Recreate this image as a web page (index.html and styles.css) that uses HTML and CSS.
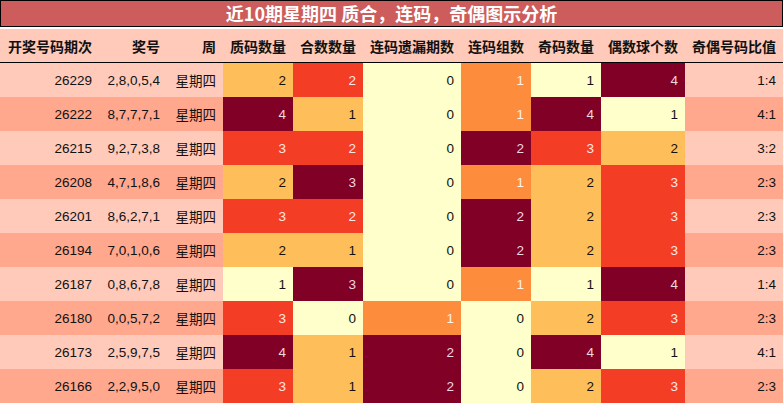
FILE: index.html
```html
<!DOCTYPE html>
<html lang="zh">
<head>
<meta charset="utf-8">
<title>近10期星期四 质合，连码，奇偶图示分析</title>
<link rel="stylesheet" href="styles.css">
</head>
<body>
<div class="wrap">
  <div class="title">近10期星期四 质合，连码，奇偶图示分析</div>
  <div class="grid">
    <div class="h">开奖号码期次</div><div class="h">奖号</div><div class="h">周</div><div class="h">质码数量</div><div class="h">合数数量</div><div class="h">连码遗漏期数</div><div class="h">连码组数</div><div class="h">奇码数量</div><div class="h">偶数球个数</div><div class="h">奇偶号码比值</div>

    <div class="c a">26229</div><div class="c a">2,8,0,5,4</div><div class="c a">星期四</div><div class="c yo">2</div><div class="c rd">2</div><div class="c ly">0</div><div class="c or">1</div><div class="c ly">1</div><div class="c dk">4</div><div class="c a">1:4</div>

    <div class="c b">26222</div><div class="c b">8,7,7,7,1</div><div class="c b">星期四</div><div class="c dk">4</div><div class="c yo">1</div><div class="c ly">0</div><div class="c or">1</div><div class="c dk">4</div><div class="c ly">1</div><div class="c b">4:1</div>

    <div class="c a">26215</div><div class="c a">9,2,7,3,8</div><div class="c a">星期四</div><div class="c rd">3</div><div class="c rd">2</div><div class="c ly">0</div><div class="c dk">2</div><div class="c rd">3</div><div class="c yo">2</div><div class="c a">3:2</div>

    <div class="c b">26208</div><div class="c b">4,7,1,8,6</div><div class="c b">星期四</div><div class="c yo">2</div><div class="c dk">3</div><div class="c ly">0</div><div class="c or">1</div><div class="c yo">2</div><div class="c rd">3</div><div class="c b">2:3</div>

    <div class="c a">26201</div><div class="c a">8,6,2,7,1</div><div class="c a">星期四</div><div class="c rd">3</div><div class="c rd">2</div><div class="c ly">0</div><div class="c dk">2</div><div class="c yo">2</div><div class="c rd">3</div><div class="c a">2:3</div>

    <div class="c b">26194</div><div class="c b">7,0,1,0,6</div><div class="c b">星期四</div><div class="c yo">2</div><div class="c yo">1</div><div class="c ly">0</div><div class="c dk">2</div><div class="c yo">2</div><div class="c rd">3</div><div class="c b">2:3</div>

    <div class="c a">26187</div><div class="c a">0,8,6,7,8</div><div class="c a">星期四</div><div class="c ly">1</div><div class="c dk">3</div><div class="c ly">0</div><div class="c or">1</div><div class="c ly">1</div><div class="c dk">4</div><div class="c a">1:4</div>

    <div class="c b">26180</div><div class="c b">0,0,5,7,2</div><div class="c b">星期四</div><div class="c rd">3</div><div class="c ly">0</div><div class="c or">1</div><div class="c ly">0</div><div class="c yo">2</div><div class="c rd">3</div><div class="c b">2:3</div>

    <div class="c a">26173</div><div class="c a">2,5,9,7,5</div><div class="c a">星期四</div><div class="c dk">4</div><div class="c yo">1</div><div class="c dk">2</div><div class="c ly">0</div><div class="c dk">4</div><div class="c ly">1</div><div class="c a">4:1</div>

    <div class="c b">26166</div><div class="c b">2,2,9,5,0</div><div class="c b">星期四</div><div class="c rd">3</div><div class="c yo">1</div><div class="c dk">2</div><div class="c ly">0</div><div class="c yo">2</div><div class="c rd">3</div><div class="c b">2:3</div>
  </div>
</div>
</body>
</html>
```

FILE: styles.css
```css
html, body {
  margin: 0;
  padding: 0;
  background: #ffffff;
}
.wrap {
  width: 783px;
}
.title {
  box-sizing: border-box;
  height: 27px;
  border: 1px solid #000;
  background: #cd5c5c;
  color: #ffffff;
  font-family: "Noto Sans CJK SC", "Noto Sans", sans-serif;
  font-weight: bold;
  font-size: 18px;
  line-height: 24px;
  text-align: center;
  margin-bottom: 2px;
}
.grid {
  display: grid;
  grid-template-columns: 99px 68px 56px 70px 70px 98px 70px 70px 84px 98px;
  grid-template-rows: 34px repeat(10, 34px);
}
.h {
  background: #ffcaba;
  border-bottom: 1px solid #000;
  font-family: "Noto Sans CJK SC", sans-serif;
  font-weight: bold;
  font-size: 14px;
  color: #111;
  display: flex;
  align-items: center;
  justify-content: flex-end;
  padding-right: 7px;
  white-space: nowrap;
}
.c {
  font-family: "Liberation Sans", "Noto Sans CJK SC", sans-serif;
  font-size: 13.5px;
  color: #111;
  display: flex;
  align-items: center;
  justify-content: flex-end;
  padding-right: 7px;
  white-space: nowrap;
}
.a { background: #ffcaba; }
.b { background: #ffa88e; }
.ly { background: #ffffcc; }
.yo { background: #febf5a; }
.or { background: #fd8c3c; color: #fff3ea; }
.rd { background: #f43d25; color: #fde8e0; }
.dk { background: #800026; color: #f0d8dc; }
```
